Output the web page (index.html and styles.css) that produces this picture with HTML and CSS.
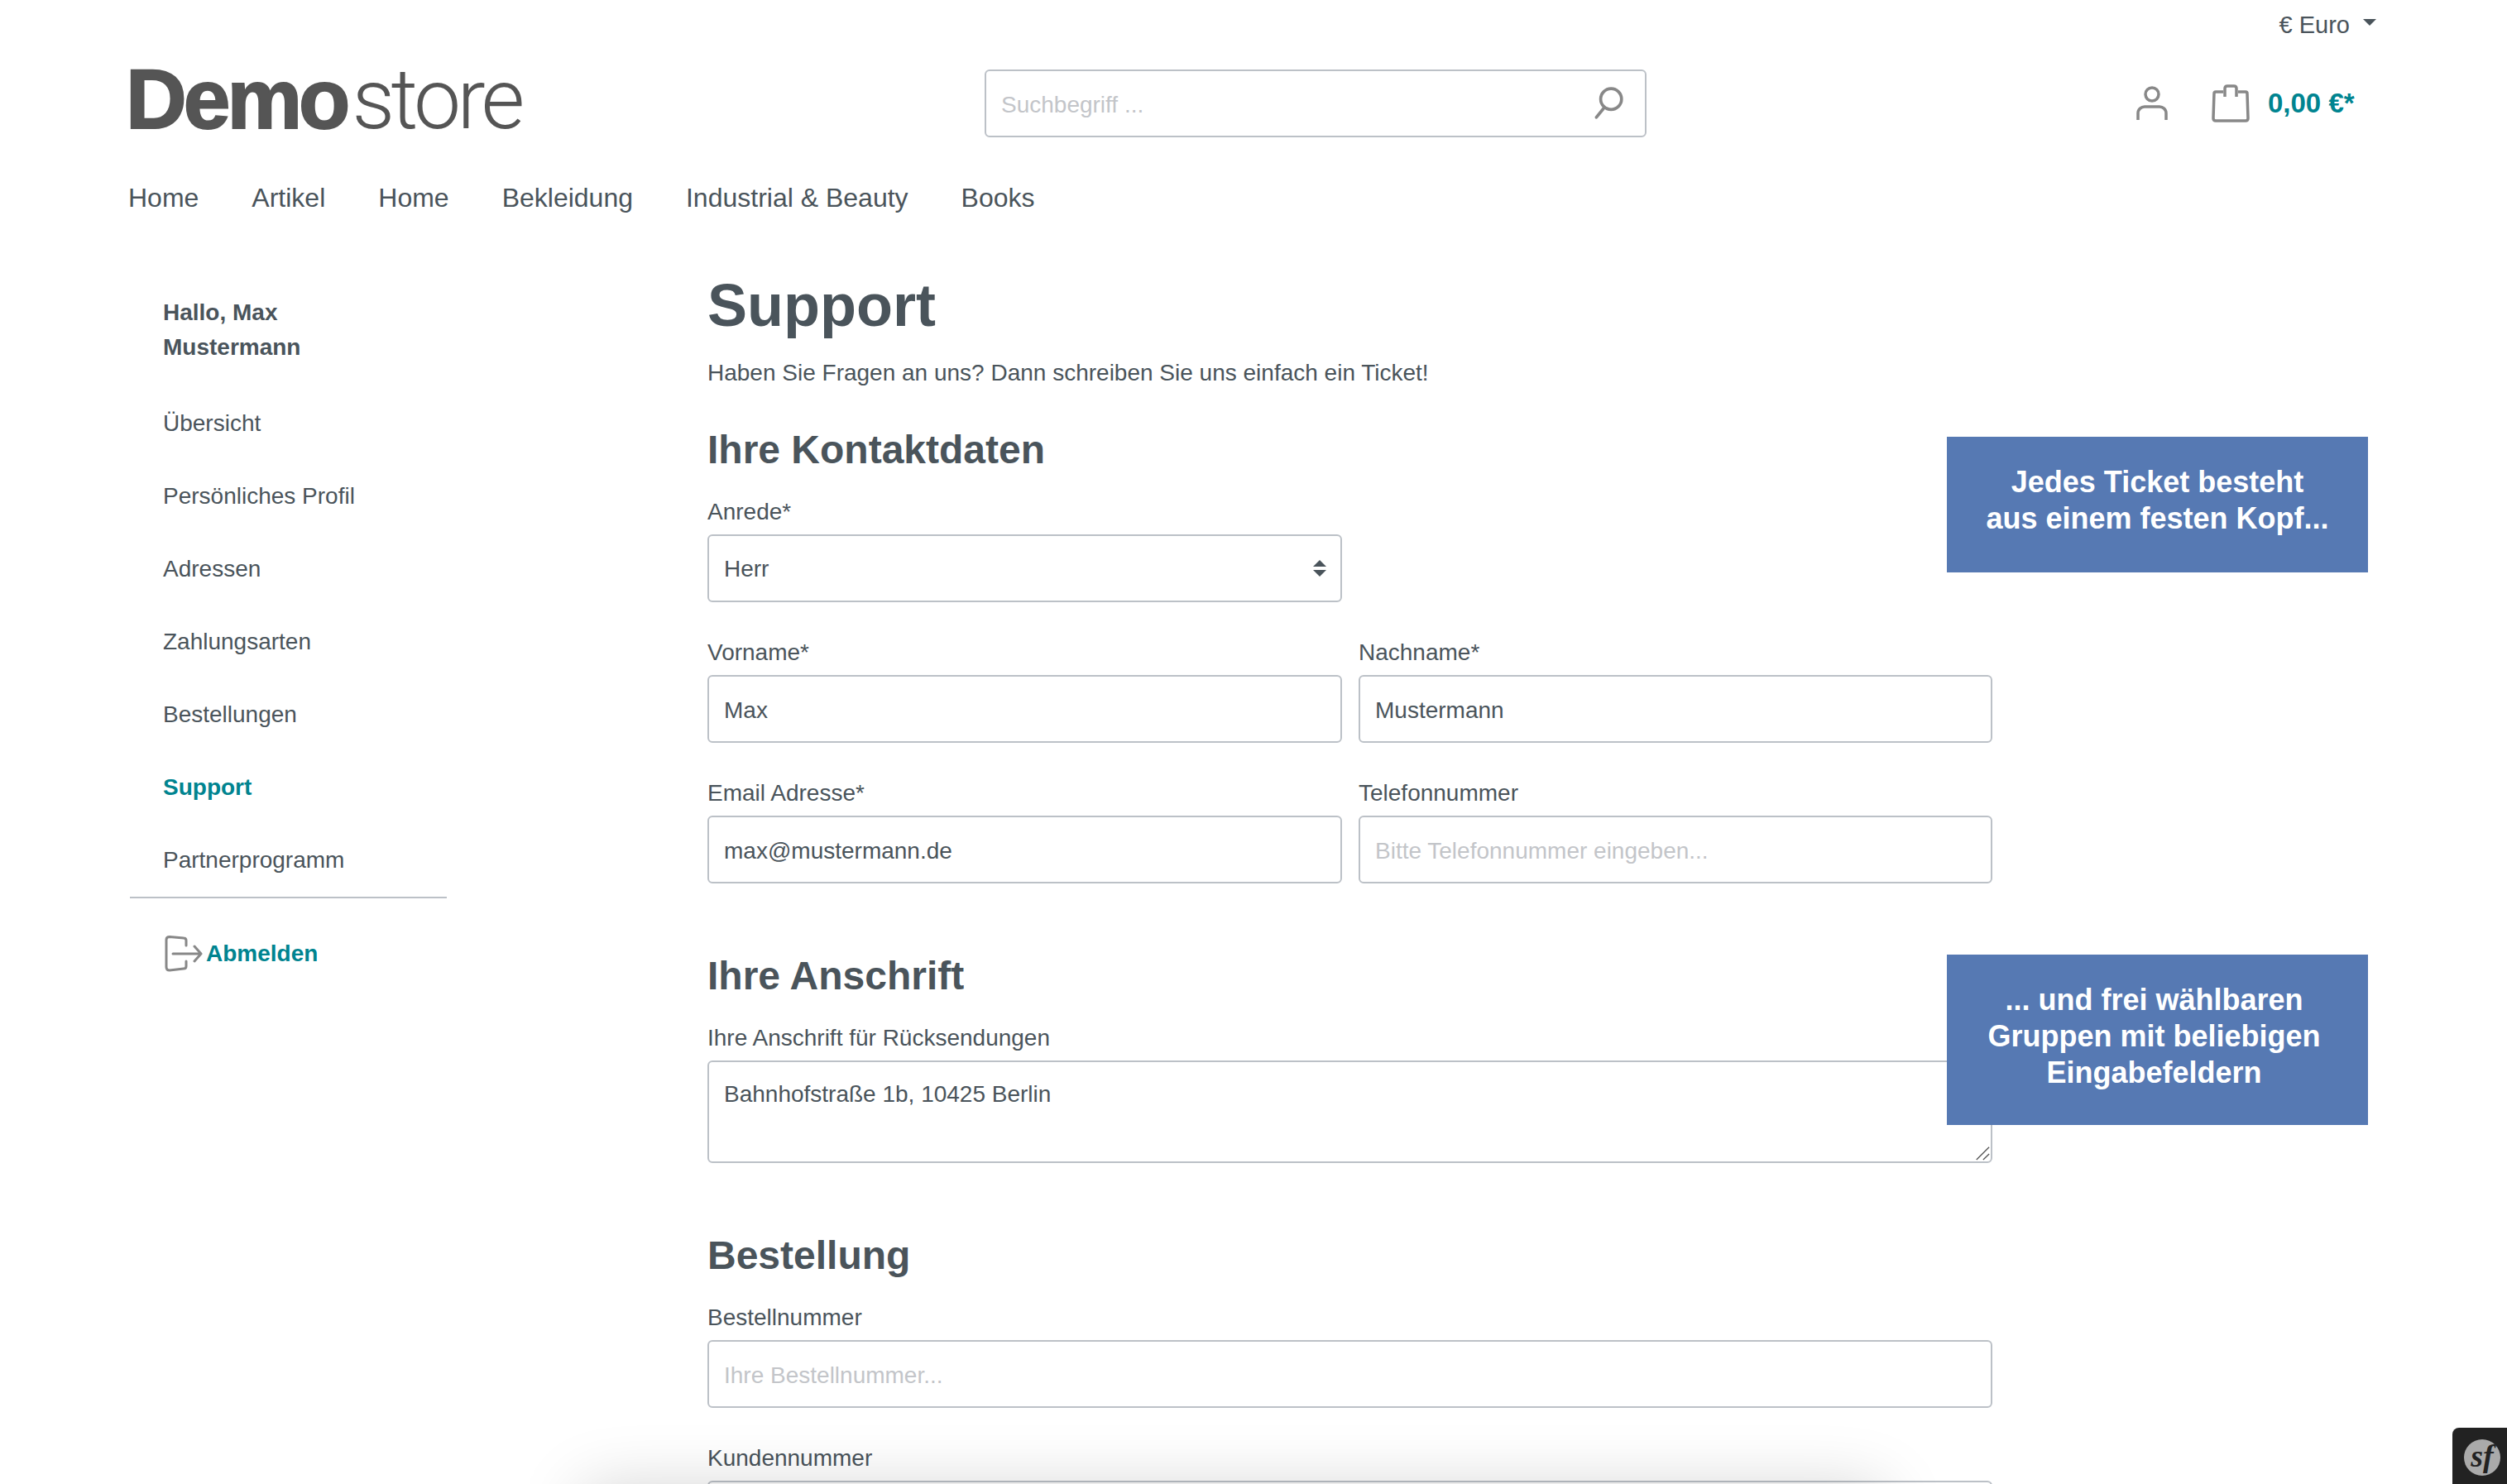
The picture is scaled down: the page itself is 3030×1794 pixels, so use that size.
FILE: index.html

```html
<!DOCTYPE html>
<html>
<head>
    <meta charset="utf-8">
    <title>Support</title>
    <link rel="stylesheet" href="styles.css">
</head>
<body>
    <div class="top-bar">
        <span class="currency">€ Euro</span>
        <span class="caret"></span>
    </div>

    <header class="header">
        <div class="logo"><b>Demo</b><span>store</span></div>
        <div class="search">
            <input type="text" placeholder="Suchbegriff ...">
            <svg class="search-icon" viewBox="0 0 40 40" fill="none" stroke="#888" stroke-width="3.500" stroke-linecap="round">
                <circle cx="24" cy="15" r="12"></circle>
                <path d="M16 25 L7 36"></path>
            </svg>
        </div>
        <div class="header-actions">
            <svg class="user-icon" viewBox="0 0 40 44" fill="none" stroke="#888" stroke-width="3.500">
                <circle cx="20" cy="11" r="8"></circle>
                <path d="M3 42 V34 C3 29 7 26 11 26 H29 C33 26 37 29 37 34 V42"></path>
            </svg>
            <svg class="bag-icon" viewBox="0 0 46 46" fill="none" stroke="#888" stroke-width="3.500" stroke-linejoin="round">
                <path d="M14 9 H5 Q3 9 3 11 L2 41 Q2 44 5 44 H41 Q44 44 44 41 L43 11 Q43 9 41 9 H32"></path>
                <path d="M16 15 V5 Q16 2 19 2 H27 Q30 2 30 5 V15"></path>
            </svg>
            <span class="cart-total">0,00 €*</span>
        </div>
    </header>

    <nav class="main-nav">
        <a>Home</a>
        <a>Artikel</a>
        <a>Home</a>
        <a>Bekleidung</a>
        <a>Industrial &amp; Beauty</a>
        <a>Books</a>
    </nav>

    <div class="page">
        <aside class="sidebar">
            <div class="greeting">Hallo, Max<br>Mustermann</div>
            <a class="side-link">Übersicht</a>
            <a class="side-link">Persönliches Profil</a>
            <a class="side-link">Adressen</a>
            <a class="side-link">Zahlungsarten</a>
            <a class="side-link">Bestellungen</a>
            <a class="side-link active">Support</a>
            <a class="side-link">Partnerprogramm</a>
            <div class="logout">
                <svg class="logout-icon" viewBox="0 0 46 44" fill="none" stroke="#888" stroke-width="3" stroke-linecap="round" stroke-linejoin="round">
                    <path d="M26 12 V6 Q26 3 23 3 L6 1.500 Q2 1.500 2 5 V38 Q2 42 6 42 L23 40 Q26 40 26 37 V31"></path>
                    <path d="M10 22 H44 M36 13 L44 22 L36 31"></path>
                </svg>
                <span>Abmelden</span>
            </div>
        </aside>

        <main class="content">
            <h1>Support</h1>
            <p class="lead">Haben Sie Fragen an uns? Dann schreiben Sie uns einfach ein Ticket!</p>

            <h2>Ihre Kontaktdaten</h2>
            <div class="form-grid">
                <div class="form-group">
                    <label>Anrede*</label>
                    <div class="select-wrap">
                        <select><option>Herr</option></select>
                        <svg class="select-arrows" viewBox="0 0 16 20" fill="#4a545b">
                            <path d="M8 0 L16 8 H0 Z M0 12 H16 L8 20 Z"></path>
                        </svg>
                    </div>
                </div>
                <div></div>
                <div class="form-group">
                    <label>Vorname*</label>
                    <input type="text" value="Max">
                </div>
                <div class="form-group">
                    <label>Nachname*</label>
                    <input type="text" value="Mustermann">
                </div>
                <div class="form-group">
                    <label>Email Adresse*</label>
                    <input type="text" value="max@mustermann.de">
                </div>
                <div class="form-group">
                    <label>Telefonnummer</label>
                    <input type="text" placeholder="Bitte Telefonnummer eingeben...">
                </div>
            </div>

            <h2 class="section-title">Ihre Anschrift</h2>
            <div class="form-group">
                <label>Ihre Anschrift für Rücksendungen</label>
                <div class="textarea-wrap">
                    <textarea>Bahnhofstraße 1b, 10425 Berlin</textarea>
                    <svg class="grip" viewBox="0 0 20 20" stroke="#555" stroke-width="1.500" fill="none">
                        <path d="M2 19 L19 2 M11 19 L19 11"></path>
                    </svg>
                </div>
            </div>

            <h2 class="section-title">Bestellung</h2>
            <div class="form-stack">
                <div class="form-group">
                    <label>Bestellnummer</label>
                    <input type="text" placeholder="Ihre Bestellnummer...">
                </div>
                <div class="form-group">
                    <label>Kundennummer</label>
                    <input type="text">
                </div>
            </div>
        </main>
    </div>

    <div class="callout callout-head">Jedes Ticket besteht<br>aus einem festen Kopf...</div>
    <div class="callout callout-groups">... und frei wählbaren<br>Gruppen mit beliebigen<br>Eingabefeldern</div>

    <div class="bottom-shadow"></div>
    <div class="sf-toolbar"><span class="sf-badge">sf</span></div>
</body>
</html>
```

FILE: styles.css

```css
* {
    box-sizing: border-box;
}
html, body {
    height: 1794px;
    overflow: hidden;
}
body {
    margin: 0;
    position: relative;
    background: #fff;
    color: #4a545b;
    font-family: "Liberation Sans", Arial, sans-serif;
    font-size: 28px;
    line-height: 42px;
}
.top-bar {
    display: flex;
    justify-content: flex-end;
    align-items: center;
    gap: 16px;
    height: 60px;
    padding-right: 158px;
}
.currency {
    font-size: 29px;
}
.caret {
    width: 0;
    height: 0;
    margin-top: -6px;
    border-left: 8px solid transparent;
    border-right: 8px solid transparent;
    border-top: 8px solid #4a545b;
}
.header {
    display: grid;
    grid-template-columns: 1035px 800px 1fr;
    align-items: center;
    height: 90px;
    margin-top: 15px;
    padding-left: 155px;
}
.logo {
    display: flex;
    align-items: baseline;
    margin-left: -3px;
    padding-bottom: 10px;
    color: #555;
    font-size: 102px;
    line-height: 90px;
}
.logo b {
    letter-spacing: -4px;
    -webkit-text-stroke: 2px #555;
}
.logo span {
    margin-left: 6px;
    font-family: "Roboto", sans-serif;
    font-weight: 300;
    font-size: 102px;
    letter-spacing: -4.500px;
}
.search {
    position: relative;
}
.search input {
    height: 82px;
    padding-right: 80px;
}
.search-icon {
    position: absolute;
    top: 20px;
    right: 26px;
    width: 42px;
    height: 42px;
}
.header-actions {
    display: flex;
    align-items: center;
    padding-left: 591px;
}
.user-icon {
    width: 40px;
    height: 44px;
    margin-right: 52px;
}
.bag-icon {
    width: 46px;
    height: 46px;
    margin-right: 22px;
}
.cart-total {
    color: #008490;
    font-size: 33px;
    font-weight: bold;
}
.main-nav {
    display: flex;
    gap: 64px;
    margin-top: 50px;
    padding-left: 155px;
    font-size: 32px;
    line-height: 48px;
}
.page {
    display: flex;
    margin-top: 62px;
    padding-left: 155px;
}
.sidebar {
    flex: 0 0 700px;
    padding-top: 32px;
}
.greeting {
    width: 385px;
    margin-bottom: 27px;
    padding-left: 42px;
    font-weight: bold;
}
.side-link {
    display: block;
    width: 385px;
    height: 88px;
    padding: 23px 0 0 42px;
}
.side-link.active {
    color: #008490;
    font-weight: bold;
}
.logout {
    display: flex;
    align-items: center;
    gap: 4px;
    width: 383px;
    margin-left: 2px;
    padding: 45px 0 0 42px;
    border-top: 2px solid #bcc1c7;
    color: #008490;
    font-weight: bold;
}
.logout-icon {
    width: 46px;
    height: 44px;
}
.content {
    width: 1553px;
}
h1 {
    margin: -4px 0 13px;
    font-size: 72px;
    line-height: 96px;
}
.lead {
    margin: 0 0 43px;
}
h2 {
    margin: 0 0 25px;
    font-size: 48px;
    line-height: 58px;
}
h2.section-title {
    margin-top: 83px;
}
.form-grid {
    display: grid;
    grid-template-columns: 767px 766px;
    column-gap: 20px;
    row-gap: 40px;
}
.form-stack {
    display: grid;
    row-gap: 40px;
}
.form-group label {
    display: block;
    margin-bottom: 6px;
}
input, select, textarea {
    display: block;
    width: 100%;
    height: 82px;
    padding: 4px 18px 0;
    border: 2px solid #bcc1c7;
    border-radius: 6px;
    background: #fff;
    color: #4a545b;
    font-family: inherit;
    font-size: 28px;
    outline: none;
}
input::placeholder, textarea::placeholder {
    color: #c3c5c9;
}
select {
    appearance: none;
    padding-top: 1px;
}
textarea {
    height: 124px;
    padding-top: 19px;
    line-height: 40px;
    resize: none;
}
.select-wrap, .textarea-wrap {
    position: relative;
}
.select-arrows {
    position: absolute;
    top: 31px;
    right: 19px;
    width: 16px;
    height: 20px;
}
.grip {
    position: absolute;
    right: 3px;
    bottom: 3px;
    width: 18px;
    height: 18px;
}
.callout {
    position: absolute;
    left: 2353px;
    width: 509px;
    background: #5679b3;
    color: #fff;
    font-size: 36px;
    font-weight: bold;
    line-height: 44px;
    text-align: center;
}
.callout-head {
    top: 528px;
    height: 164px;
    padding-top: 33px;
}
.callout-groups {
    top: 1154px;
    height: 206px;
    padding: 33px 8px 0 0;
}
.bottom-shadow {
    position: absolute;
    left: 735px;
    top: 1830px;
    width: 1510px;
    height: 100px;
    box-shadow: 0 0 80px 30px rgba(0, 0, 0, 0.18);
}
.sf-toolbar {
    position: absolute;
    right: 0;
    bottom: 0;
    width: 66px;
    height: 68px;
    padding: 14px 0 0 14px;
    border-top-left-radius: 8px;
    background: #222;
}
.sf-badge {
    display: block;
    width: 44px;
    height: 44px;
    border-radius: 50%;
    background: #aaa;
    color: #222;
    font-family: "Liberation Serif", serif;
    font-size: 38px;
    font-style: italic;
    font-weight: bold;
    line-height: 40px;
    text-align: center;
}
```
